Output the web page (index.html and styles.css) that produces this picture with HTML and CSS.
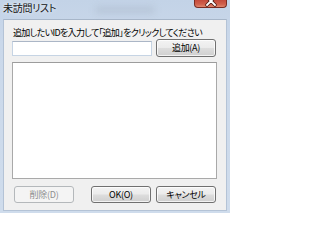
FILE: index.html
```html
<!DOCTYPE html>
<html lang="ja">
<head>
<meta charset="utf-8">
<title>未訪問リスト</title>
<link rel="stylesheet" href="styles.css">
</head>
<body>
<div class="window">
  <div class="titlebar">
    <span class="title">未訪問リスト</span>
    <span class="glass-blur"></span>
    <span class="close">
      <svg class="close-x" width="14" height="8" viewBox="0 0 14 8">
        <path d="M3 -3 L11 5 M11 -3 L3 5" stroke="#4a1a14" stroke-width="3.4" stroke-linecap="round"/>
        <path d="M3 -3 L11 5 M11 -3 L3 5" stroke="#ffffff" stroke-width="1.8" stroke-linecap="round"/>
      </svg>
    </span>
  </div>
  <div class="client">
    <div class="label">追加したいIDを入力して「追加」をクリックしてください</div>
    <div class="row-input">
      <input class="textbox" type="text">
      <button class="btn">追加(A)</button>
    </div>
    <div class="listbox"></div>
    <div class="row-buttons">
      <button class="btn btn-disabled">削除(D)</button>
      <button class="btn btn-ok">OK(O)</button>
      <button class="btn">キャンセル</button>
    </div>
  </div>
</div>
</body>
</html>
```

FILE: styles.css
```css
html, body {
  margin: 0;
  padding: 0;
  background: #ffffff;
}

.window {
  width: 230px;
  height: 213px;
  box-sizing: border-box;
  padding: 0 3px 2px 3px;
  background: linear-gradient(180deg, #c3d3e7 0%, #cad8ea 20%, #cfdcec 100%);
  display: flex;
  flex-direction: column;
  font-family: "Noto Sans CJK JP", "Noto Sans", sans-serif;
  font-feature-settings: "palt";
}

.titlebar {
  height: 19px;
  flex: 0 0 19px;
  display: flex;
  align-items: flex-start;
  justify-content: space-between;
}

.title {
  flex: 0 0 auto;
  font-size: 10px;
  line-height: 14px;
  padding-top: 1px;
  color: #141414;
  text-shadow: 0 0 4px rgba(255,255,255,0.9);
  letter-spacing: -0.3px;
  white-space: nowrap;
}

.glass-blur {
  flex: 0 0 60px;
  margin-top: 6px;
  height: 8px;
  border-radius: 4px;
  background: rgba(160, 172, 190, 0.3);
  filter: blur(3px);
}

.close {
  flex: 0 0 33px;
  width: 33px;
  height: 8px;
  box-sizing: border-box;
  border: 1px solid #7a2c22;
  border-top: 0;
  border-radius: 0 0 4px 4px;
  background: linear-gradient(180deg, #c44a3b 0%, #d0604c 60%, #e0866d 100%);
  display: flex;
  justify-content: center;
  align-items: flex-start;
  overflow: hidden;
}

.close-x {
  display: block;
  flex: 0 0 14px;
}

.client {
  height: 192px;
  flex: 0 0 192px;
  box-sizing: border-box;
  border: 1px solid #b4c3d6;
  border-top-color: #a7b6c9;
  background: #f0f0f0;
  padding: 7px 0 0 8px;
  display: flex;
  flex-direction: column;
  align-items: flex-start;
}

.label {
  font-size: 9px;
  line-height: 11px;
  height: 11px;
  margin-left: 1px;
  color: #000000;
  white-space: nowrap;
  letter-spacing: -0.65px;
}

.row-input {
  margin-top: 1px;
  width: 205px;
  height: 18px;
  display: flex;
  align-items: flex-start;
  gap: 4px;
}

.textbox {
  width: 140px;
  height: 15px;
  margin: 2px 0 0 0;
  padding: 0;
  box-sizing: border-box;
  border: 1px solid #c6d4e4;
  border-top-color: #abb6c6;
  background: #ffffff;
  outline: none;
}

.btn {
  width: 60px;
  height: 18px;
  box-sizing: border-box;
  margin: 0;
  padding: 0;
  border: 1px solid #707070;
  border-radius: 3px;
  background: linear-gradient(180deg, #f3f3f3 0%, #ebebeb 48%, #dddddd 52%, #cfcfcf 100%);
  box-shadow: inset 0 0 0 1px rgba(255,255,255,0.75);
  font-family: "Noto Sans CJK JP", "Noto Sans", sans-serif;
  font-feature-settings: "palt";
  font-size: 9px;
  line-height: 14px;
  color: #000000;
  letter-spacing: -0.3px;
}

.listbox {
  margin-top: 5px;
  width: 205px;
  height: 117px;
  box-sizing: border-box;
  border: 1px solid #a9a9a9;
  border-top-color: #9c9c9c;
  background: #ffffff;
}

.row-buttons {
  margin-top: 7px;
  width: 204px;
  height: 17px;
  display: flex;
  gap: 5px;
}

.row-buttons .btn {
  height: 17px;
  line-height: 13px;
}

.btn-disabled {
  margin-left: 2px;
  margin-right: auto;
  border-color: #b4b8bb;
  background: #f4f4f4;
  box-shadow: none;
  color: #8e8e8e;
}
```
